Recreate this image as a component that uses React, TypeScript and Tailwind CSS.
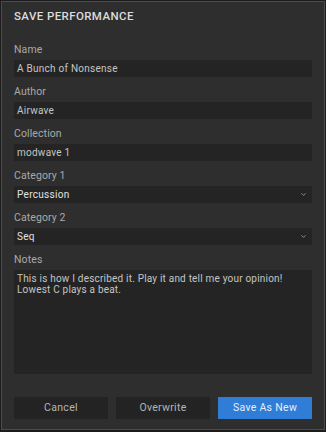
import { ChevronDown } from 'lucide-react'

interface TextFieldProps {
  label: string
  value: string
}

function TextField({ label, value }: TextFieldProps) {
  return (
    <div className="flex flex-col">
      <span className="h-[14px] text-[10.5px] leading-[14px] tracking-[0.1px] text-[#a9a9a9]">{label}</span>
      <div className="mt-[3px] flex h-[17px] items-center bg-[#242424] px-[3px] text-[10px] tracking-[0.25px] text-[#c4c4c4]">
        {value}
      </div>
    </div>
  )
}

function SelectField({ label, value }: TextFieldProps) {
  return (
    <div className="flex flex-col">
      <span className="h-[14px] text-[10.5px] leading-[14px] tracking-[0.1px] text-[#a9a9a9]">{label}</span>
      <div className="mt-[3px] flex h-[17px] items-center justify-between bg-[#242424] pl-[3px] pr-[5px] text-[10px] tracking-[0.3px] text-[#e2e2e2]">
        <span>{value}</span>
        <ChevronDown className="h-[7px] w-[7px] text-[#9a9a9a]" strokeWidth={3} />
      </div>
    </div>
  )
}

export default function App() {
  return (
    <div
      className="h-[432px] w-[326px] bg-[#1c1c1c] p-px"
      style={{ fontFamily: 'Roboto, "Liberation Sans", sans-serif' }}
    >
      <div className="flex h-[429px] flex-col border border-[#4c4c4c] bg-[#2e2e2e] px-[12px]">
        <h1 className="mt-[7px] text-[11.5px] font-medium leading-[14px] tracking-[0.4px] text-[#dcdcdc]">
          SAVE PERFORMANCE
        </h1>

        <div className="mt-[20px] flex flex-col gap-[8px]">
          <TextField label="Name" value="A Bunch of Nonsense" />
          <TextField label="Author" value="Airwave" />
          <TextField label="Collection" value="modwave 1" />
          <SelectField label="Category 1" value="Percussion" />
          <SelectField label="Category 2" value="Seq" />

          <div className="flex flex-col">
            <span className="h-[14px] text-[10.5px] leading-[14px] tracking-[0.1px] text-[#a9a9a9]">Notes</span>
            <div className="mt-[3px] h-[104px] bg-[#242424] px-[3px] pt-[3px] text-[10px] leading-[11px] tracking-[0.2px] text-[#c4c4c4]">
              This is how I described it. Play it and tell me your opinion!
              <br />
              Lowest C plays a beat.
            </div>
          </div>
        </div>

        <div className="mt-[23px] grid grid-cols-3 gap-[8px]">
          <button className="h-[22px] bg-[#232323] text-[10.5px] tracking-[0.3px] text-[#b5b5b5]">Cancel</button>
          <button className="h-[22px] bg-[#232323] text-[10.5px] tracking-[0.3px] text-[#b5b5b5]">Overwrite</button>
          <button className="h-[22px] bg-[#2f7dd7] text-[10.5px] tracking-[0.3px] text-[#e8eef8]">Save As New</button>
        </div>
      </div>
    </div>
  )
}
